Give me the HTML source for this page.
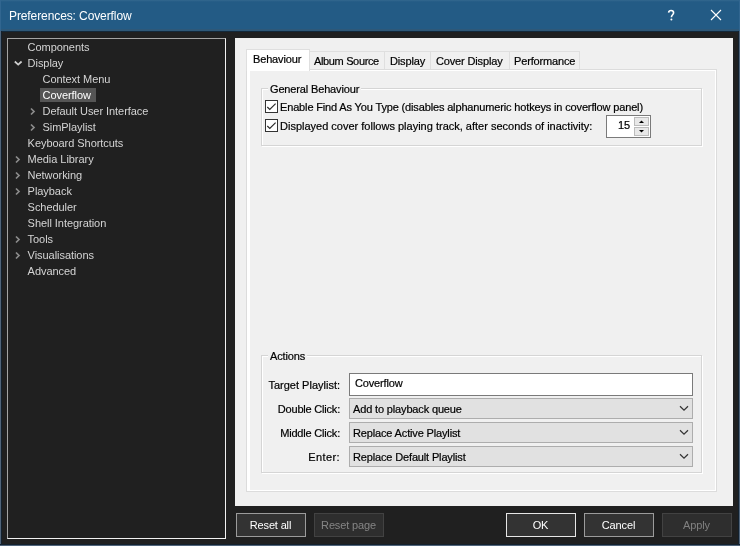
<!DOCTYPE html>
<html><head><meta charset="utf-8">
<style>
*{box-sizing:border-box;margin:0;padding:0}
html,body{will-change:transform;width:740px;height:546px;overflow:hidden;background:#202020;font-family:"Liberation Sans",sans-serif;font-size:11px;position:relative}
.a{position:absolute;white-space:pre}
#title{left:0;top:0;width:740px;height:32px;background:linear-gradient(#34698f 0px,#2a6089 1px,#235b85 2px,#235b85 29px,#2e5878 29px,#2e5878 31px,#13293b 31px,#13293b 32px)}
#wl{left:0;top:31px;width:2px;height:515px;background:linear-gradient(90deg,#50647a 1px,#13212e 1px)}
#wr{left:738px;top:31px;width:2px;height:515px;background:linear-gradient(90deg,#13212e 1px,#50647a 1px)}
#wb{left:0;top:544px;width:740px;height:2px;background:linear-gradient(#13212e 1px,#50647a 1px)}
#ttext{left:9px;top:9px;color:#fff;font-size:12px;letter-spacing:-0.1px}
#tree{left:7px;top:38px;width:219px;height:501px;border:1px solid #a4a4a4;border-right-color:#f2f2f2;border-bottom-color:#f2f2f2;background:#202020}
.ti{color:#d4d4d4;letter-spacing:-0.05px}
.chev{position:absolute}
#panel{left:235px;top:38px;width:498px;height:468px;background:#f0f0f0}
.tab{position:absolute;border:1px solid #dfdfdf;border-bottom:none;background:#f0f0f0;color:#000;-webkit-text-stroke:0.2px #000;letter-spacing:-0.15px}
.tab span{position:absolute;white-space:pre}
#page{left:246px;top:69px;width:471px;height:423px;border:1px solid #dcdcdc;background:#fff}
#inner{left:250px;top:71px;width:465px;height:419px;background:#f0f0f0}
.gb{position:absolute;border:1px solid #d5d5d5;box-shadow:1px 1px 0 #fff, inset 1px 1px 0 #fff}
.lbl{color:#000;-webkit-text-stroke:0.2px #000;letter-spacing:-0.15px}
.cb{position:absolute;width:13px;height:13px;border:1px solid #333;background:#fff}
.combo{position:absolute;left:349px;width:344px;height:21px;background:#e1e1e1;border:1px solid #adadad}
.btn{position:absolute;top:513px;width:70px;height:24px;border:1px solid #9b9b9b;background:#333;color:#fff;text-align:center;line-height:22px;letter-spacing:-0.15px;text-indent:-1px}
</style></head><body>
<div class="a" id="title"></div>
<div class="a" id="ttext">Preferences: Coverflow</div>
<svg class="a" style="left:660px;top:4px" width="20" height="20" viewBox="660 4 20 20"><path d="M668.6 12.6C668.8 10.9 670.2 10.5 671.1 10.5C672.6 10.5 673.6 11.4 673.6 12.8C673.6 14.7 671.4 14.9 671.4 17.3" fill="none" stroke="#fff" stroke-width="1.6"/><circle cx="671.4" cy="19.4" r="1" fill="#fff"/></svg>
<svg class="a" style="left:710px;top:9px" width="12" height="12" viewBox="0 0 12 12"><path d="M1 1L11 11M11 1L1 11" stroke="#fff" stroke-width="1.1"/></svg>
<div class="a" style="left:0;top:0;width:1px;height:31px;background:#316690"></div><div class="a" style="left:739px;top:0;width:1px;height:31px;background:#316690"></div><div class="a" id="wl"></div><div class="a" id="wr"></div><div class="a" id="wb"></div>

<div class="a" id="tree"></div>
<div class="a" style="left:40px;top:88px;width:56px;height:14px;background:#555"></div>
<div class="a ti" style="left:27.6px;top:41px">Components</div>
<div class="a ti" style="left:27.6px;top:57px">Display</div>
<div class="a ti" style="left:42.5px;top:73px">Context Menu</div>
<div class="a ti" style="left:42.5px;top:89px;color:#fff">Coverflow</div>
<div class="a ti" style="left:42.5px;top:105px">Default User Interface</div>
<div class="a ti" style="left:42.5px;top:121px">SimPlaylist</div>
<div class="a ti" style="left:27.6px;top:137px">Keyboard Shortcuts</div>
<div class="a ti" style="left:27.6px;top:153px">Media Library</div>
<div class="a ti" style="left:27.6px;top:169px">Networking</div>
<div class="a ti" style="left:27.6px;top:185px">Playback</div>
<div class="a ti" style="left:27.6px;top:201px">Scheduler</div>
<div class="a ti" style="left:27.6px;top:217px">Shell Integration</div>
<div class="a ti" style="left:27.6px;top:233px">Tools</div>
<div class="a ti" style="left:27.6px;top:249px">Visualisations</div>
<div class="a ti" style="left:27.6px;top:265px">Advanced</div>
<svg class="a" style="left:0;top:0" width="60" height="290">
<g fill="none" stroke="#d0d0d0" stroke-width="1.7"><path d="M14.8 61.5L18.2 64.6L21.6 61.5"/></g>
<g fill="none" stroke="#8c8c8c" stroke-width="1.7">
<path d="M31 108.5L34 111.5L31 114.5"/>
<path d="M31 124.5L34 127.5L31 130.5"/>
<path d="M16 156.5L19 159.5L16 162.5"/>
<path d="M16 172.5L19 175.5L16 178.5"/>
<path d="M16 188.5L19 191.5L16 194.5"/>
<path d="M16 236.5L19 239.5L16 242.5"/>
<path d="M16 252.5L19 255.5L16 258.5"/>
</g></svg>

<div class="a" id="panel"></div>
<div class="a" id="page"></div>
<div class="tab" style="left:309px;top:51px;width:76px;height:18px"><span style="left:4px;top:3px;letter-spacing:-0.35px">Album Source</span></div>
<div class="tab" style="left:384px;top:51px;width:47px;height:18px"><span style="left:5px;top:3px">Display</span></div>
<div class="tab" style="left:430px;top:51px;width:80px;height:18px"><span style="left:5px;top:3px">Cover Display</span></div>
<div class="tab" style="left:509px;top:51px;width:71px;height:18px"><span style="left:4px;top:3px">Performance</span></div>
<div class="tab" style="left:246px;top:49px;width:64px;height:22px;background:#fff"><span style="left:6px;top:3px">Behaviour</span></div>
<div class="a" id="inner"></div>

<div class="gb" style="left:261px;top:88px;width:441px;height:58px"></div>
<div class="a lbl" style="left:268px;top:83px;background:#f0f0f0;padding:0 2px">General Behaviour</div>
<div class="cb" style="left:265px;top:100px"></div>
<div class="a lbl" style="left:280px;top:101px">Enable Find As You Type (disables alphanumeric hotkeys in coverflow panel)</div>
<div class="cb" style="left:265px;top:119px"></div>
<div class="a lbl" style="left:280px;top:120px;letter-spacing:0;word-spacing:0">Displayed cover follows playing track, after seconds of inactivity:</div>
<svg class="a" style="left:265px;top:100px" width="13" height="32"><g fill="none" stroke="#2a2a2a" stroke-width="1.15"><path d="M2.3 7L4.8 9.5L10.6 3.6"/><path d="M2.3 26L4.8 28.5L10.6 22.6"/></g></svg>
<div class="a" style="left:606px;top:115px;width:45px;height:23px;border:1px solid #7a7a7a;background:#fff"></div>
<div class="a lbl" style="left:618px;top:119px">15</div>
<div class="a" style="left:634px;top:117px;width:15px;height:9px;border:1px solid #bcbcbc;background:#e8e8e8"></div>
<div class="a" style="left:634px;top:127px;width:15px;height:9px;border:1px solid #bcbcbc;background:#e8e8e8"></div>
<svg class="a" style="left:634px;top:117px" width="15" height="18"><path d="M5 6L10 6L7.5 3.5Z" fill="#000"/><path d="M5 13L10 13L7.5 15.5Z" fill="#000"/></svg>

<div class="gb" style="left:261px;top:355px;width:441px;height:118px"></div>
<div class="a lbl" style="left:268px;top:350px;background:#f0f0f0;padding:0 2px">Actions</div>
<div class="a lbl" style="left:200px;width:140px;text-align:right;letter-spacing:0;top:379px">Target Playlist:</div>
<div class="a lbl" style="left:200px;width:140px;text-align:right;letter-spacing:-0.2px;top:403px">Double Click:</div>
<div class="a lbl" style="left:200px;width:140px;text-align:right;letter-spacing:-0.2px;top:427px">Middle Click:</div>
<div class="a lbl" style="left:200px;width:140px;text-align:right;letter-spacing:0.4px;top:451px">Enter:</div>
<div class="a" style="left:349px;top:373px;width:344px;height:23px;border:1px solid #7a7a7a;background:#fff"></div>
<div class="a lbl" style="left:355px;top:377px">Coverflow</div>
<div class="combo" style="top:398px"></div>
<div class="combo" style="top:422px"></div>
<div class="combo" style="top:446px"></div>
<div class="a lbl" style="left:353px;top:403px">Add to playback queue</div>
<div class="a lbl" style="left:353px;top:427px">Replace Active Playlist</div>
<div class="a lbl" style="left:353px;top:451px">Replace Default Playlist</div>
<svg class="a" style="left:678px;top:398px" width="14" height="70"><g fill="none" stroke="#333" stroke-width="1.2"><path d="M2 8.3L6 12.2L10 8.3"/><path d="M2 32.3L6 36.2L10 32.3"/><path d="M2 56.3L6 60.2L10 56.3"/></g></svg>

<div class="btn" style="left:236px">Reset all</div>
<div class="btn" style="left:314px;border-color:#424242;background:#2e2e2e;color:#858585">Reset page</div>
<div class="btn" style="left:506px;border-color:#e6e6e6">OK</div>
<div class="btn" style="left:584px">Cancel</div>
<div class="btn" style="left:662px;border-color:#424242;background:#2e2e2e;color:#808080">Apply</div>
</body></html>
